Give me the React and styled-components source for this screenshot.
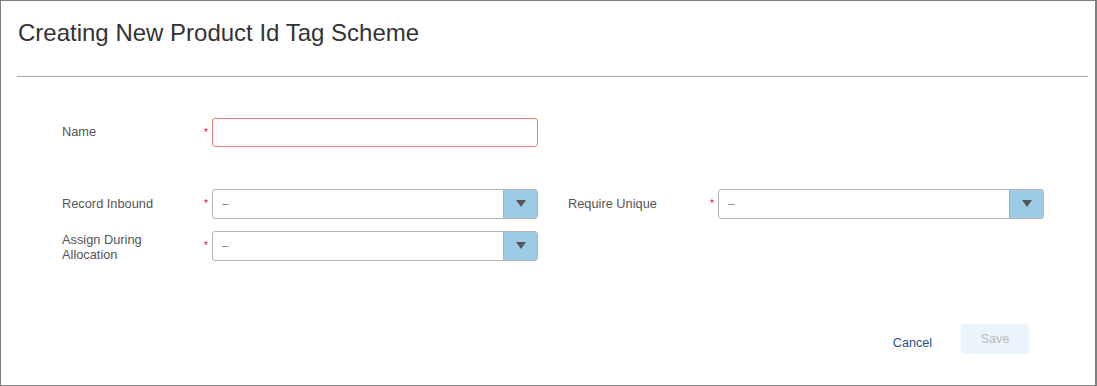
import React from "react";
import styled, { createGlobalStyle } from "styled-components";

const Global = createGlobalStyle`
  html, body { margin: 0; padding: 0; background: #fff; }
  body { font-family: "Liberation Sans", Arial, sans-serif; }
  * { box-sizing: border-box; }
`;

const Frame = styled.div`
  width: 1097px;
  height: 386px;
  border: 1px solid #808080;
  border-right-width: 2px;
  display: flex;
  flex-direction: column;
  background: #fff;
`;

const Header = styled.div`
  padding: 18px 0 0 17px;
  height: 75px;
`;

const Title = styled.h1`
  margin: 0;
  font-size: 24px;
  font-weight: 400;
  color: #333;
  line-height: 28px;
`;

const Divider = styled.hr`
  margin: 0 7px 0 16px;
  border: 0;
  border-top: 1px solid #aaa;
  height: 0;
`;

const Form = styled.div`
  padding: 41px 0 0 61px;
  display: flex;
  flex-direction: column;
`;

const Row = styled.div`
  display: flex;
  align-items: center;
  gap: 30px;
  margin-top: ${(p) => p.$mt || 0}px;
`;

const Field = styled.div`
  display: flex;
  align-items: center;
  width: 476px;
`;

const Label = styled.div`
  width: 142px;
  font-size: 12.8px;
  line-height: 15px;
  color: #555;
  margin: ${(p) => (p.$two ? "1px 0 -1px" : "-1px 0 1px")};
`;

const Star = styled.span`
  width: 8px;
  color: #e0003c;
  font-size: 10px;
  line-height: 10px;
`;

const TextInput = styled.div`
  width: 326px;
  height: 29px;
  border: 1px solid #f07a80;
  border-radius: 3px;
  background: #fff;
`;

const Select = styled.div`
  width: 326px;
  height: 30px;
  border: 1px solid #b4b4b4;
  border-radius: 3px;
  display: flex;
  align-items: stretch;
  overflow: hidden;
  background: #fff;
`;

const SelectValue = styled.div`
  flex: 1;
  padding-left: 9px;
  display: flex;
  align-items: center;
  font-size: 12px;
  color: #888;
`;

const Arrow = styled.div`
  width: 34px;
  background: #9ccbe8;
  border-left: 1px solid #8fb8d2;
  display: flex;
  align-items: center;
  justify-content: center;
`;

const Footer = styled.div`
  margin-top: auto;
  display: flex;
  justify-content: flex-end;
  align-items: center;
  gap: 29px;
  padding: 0 66px 31px 0;
`;

const CancelBtn = styled.span`
  font-size: 12.6px;
  color: #1f4f8f;
  margin-top: 8px;
`;

const SaveBtn = styled.div`
  width: 68px;
  height: 30px;
  border-radius: 3px;
  background: #eaf4fd;
  color: #bbb;
  font-size: 12.6px;
  display: flex;
  align-items: center;
  justify-content: center;
`;

const Caret = () => (
  <svg width="10" height="8" viewBox="0 0 10 8">
    <path d="M0 0 H10 L5 7 Z" fill="#555" />
  </svg>
);

const SelectBox = () => (
  <Select>
    <SelectValue>–</SelectValue>
    <Arrow>
      <Caret />
    </Arrow>
  </Select>
);

export default function App() {
  return (
    <>
      <Global />
      <Frame>
        <Header>
          <Title>Creating New Product Id Tag Scheme</Title>
        </Header>
        <Divider />
        <Form>
          <Row>
            <Field>
              <Label>Name</Label>
              <Star>*</Star>
              <TextInput />
            </Field>
          </Row>
          <Row $mt={42}>
            <Field>
              <Label>Record Inbound</Label>
              <Star>*</Star>
              <SelectBox />
            </Field>
            <Field>
              <Label>Require Unique</Label>
              <Star>*</Star>
              <SelectBox />
            </Field>
          </Row>
          <Row $mt={12}>
            <Field>
              <Label $two>
                Assign During
                <br />
                Allocation
              </Label>
              <Star>*</Star>
              <SelectBox />
            </Field>
          </Row>
        </Form>
        <Footer>
          <CancelBtn>Cancel</CancelBtn>
          <SaveBtn>Save</SaveBtn>
        </Footer>
      </Frame>
    </>
  );
}
